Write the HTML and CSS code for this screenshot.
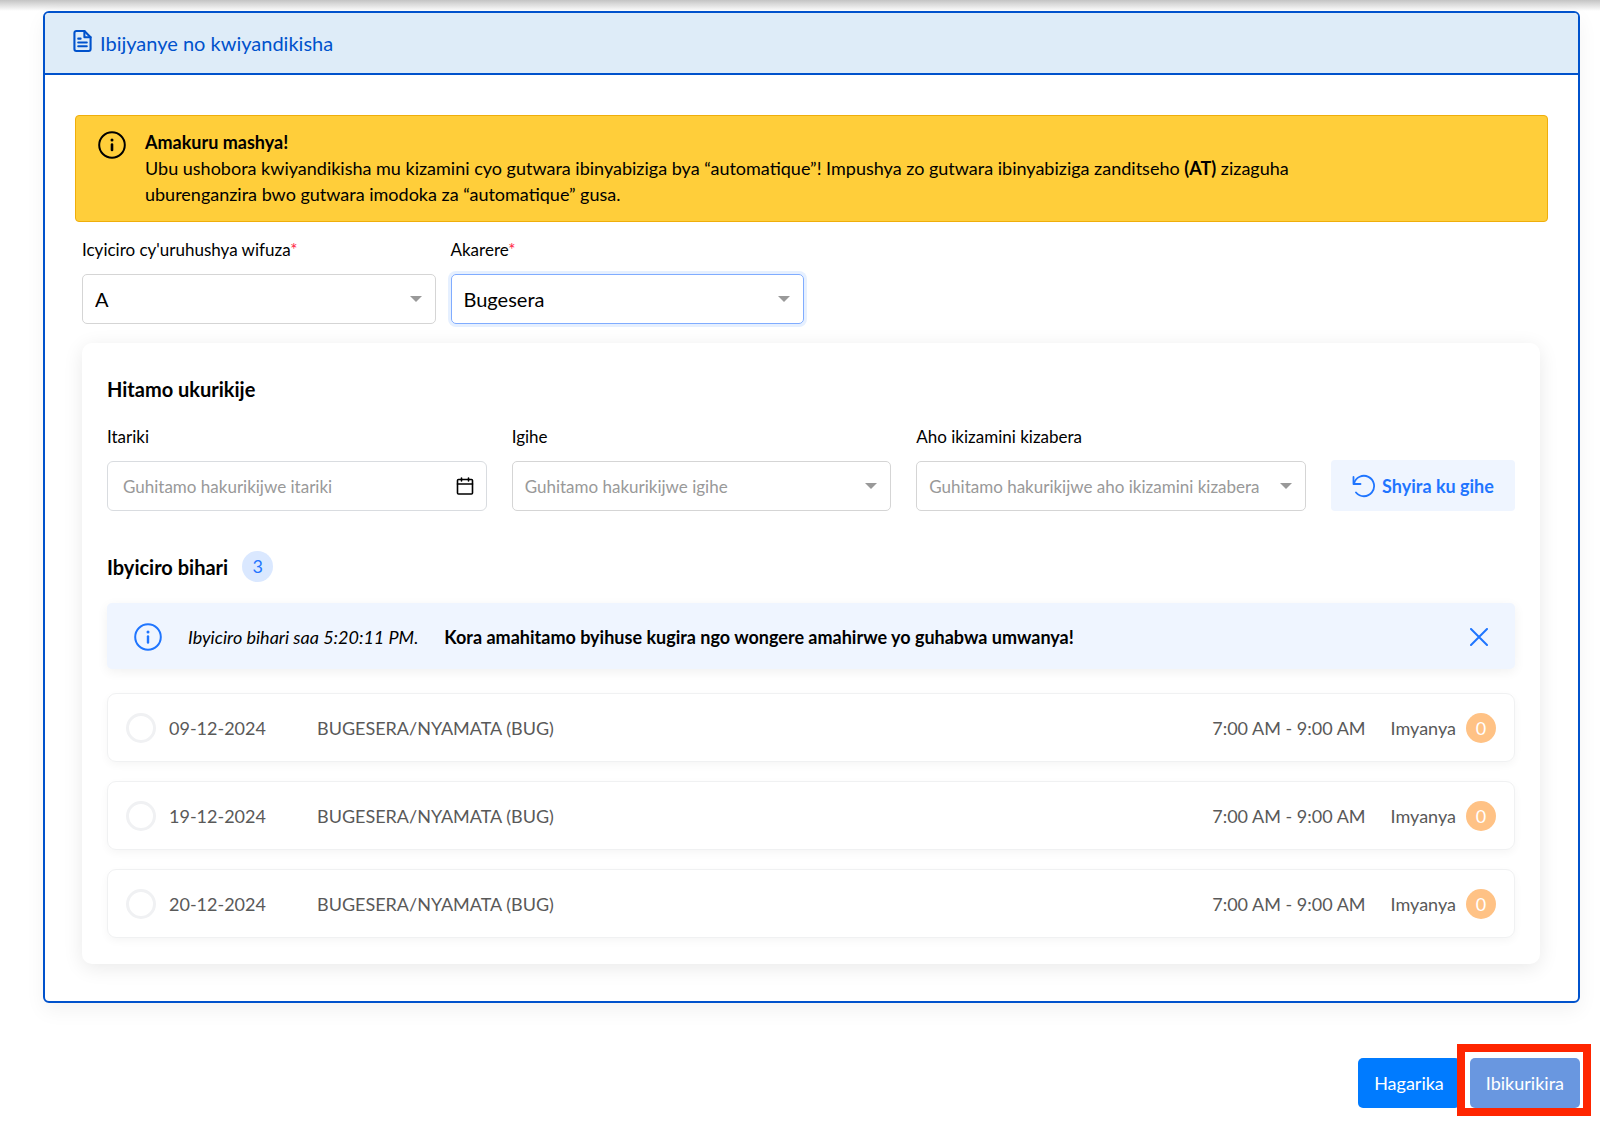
FILE: index.html
```html
<!DOCTYPE html>
<html lang="rw">
<head>
    <meta charset="UTF-8">
    <meta name="viewport" content="width=device-width, initial-scale=1.0">
    <title>Ibijyanye no kwiyandikisha</title>
    <link rel="stylesheet" href="styles.css">
</head>
<body>

<div class="top-shadow"></div>

<form class="page">
    <section class="card">
        <header class="card-header">
            <svg class="icon-file" viewBox="0 0 20 24" fill="none" stroke="currentColor" stroke-width="2.2" stroke-linejoin="round" stroke-linecap="round">
                <path d="M12 1.5H3.5a2 2 0 0 0-2 2v17a2 2 0 0 0 2 2h13a2 2 0 0 0 2-2V8z"/>
                <path d="M12 1.5V8h6.5M5.5 9.5H8M5.5 13.5h9M5.5 17.5h9"/>
            </svg>
            <span>Ibijyanye no kwiyandikisha</span>
        </header>

        <div class="card-body">
            <div class="alert">
                <svg class="icon-info" viewBox="0 0 28 28" fill="none" stroke="currentColor" stroke-width="2" stroke-linecap="round">
                    <circle cx="14" cy="14" r="12.8"/>
                    <path d="M14 13.5v5.5" stroke-width="2.6"/>
                    <circle cx="14" cy="9" r="1.5" fill="currentColor" stroke="none"/>
                </svg>
                <div class="alert-text">
                    <strong>Amakuru mashya!</strong><br>
                    Ubu ushobora kwiyandikisha mu kizamini cyo gutwara ibinyabiziga bya “automatique”! Impushya zo gutwara ibinyabiziga zanditseho <strong>(AT)</strong> zizaguha<br>
                    uburenganzira bwo gutwara imodoka za “automatique” gusa.
                </div>
            </div>

            <div class="choices">
                <div class="field">
                    <label for="category">Icyiciro cy'uruhushya wifuza<span class="required">*</span></label>
                    <div class="select-box">
                        <select id="category">
                            <option>A</option>
                        </select>
                    </div>
                </div>
                <div class="field">
                    <label for="district">Akarere<span class="required">*</span></label>
                    <div class="select-box focused">
                        <select id="district">
                            <option>Bugesera</option>
                        </select>
                    </div>
                </div>
            </div>

            <section class="panel">
                <h2>Hitamo ukurikije</h2>
                <div class="filters">
                    <div class="field">
                        <label for="date">Itariki</label>
                        <div class="date-box">
                            <input type="text" id="date" placeholder="Guhitamo hakurikijwe itariki">
                            <svg class="icon-calendar" viewBox="0 0 18 18" fill="none" stroke="currentColor" stroke-width="1.6" stroke-linejoin="round" stroke-linecap="round">
                                <rect x="1.5" y="2.5" width="15" height="14.5" rx="1"/>
                                <path d="M1.5 7h15M5.5 1v3M12.5 1v3"/>
                            </svg>
                        </div>
                    </div>
                    <div class="field">
                        <label for="time">Igihe</label>
                        <div class="select-box empty">
                            <select id="time">
                                <option>Guhitamo hakurikijwe igihe</option>
                            </select>
                        </div>
                    </div>
                    <div class="field">
                        <label for="place">Aho ikizamini kizabera</label>
                        <div class="select-box empty">
                            <select id="place">
                                <option>Guhitamo hakurikijwe aho ikizamini kizabera</option>
                            </select>
                        </div>
                    </div>
                    <button type="reset" class="btn-reset">
                        <svg class="icon-reset" viewBox="0 0 24 24" fill="none" stroke="currentColor" stroke-width="1.8" stroke-linecap="round" stroke-linejoin="round">
                            <path d="M1.5 3v7h7"/>
                            <path d="M2 9.5A10.2 10.2 0 1 1 4 18.5"/>
                        </svg>
                        Shyira ku gihe
                    </button>
                </div>

                <h2 class="slots-title">Ibyiciro bihari <span class="count">3</span></h2>

                <div class="notice">
                    <svg class="icon-info" viewBox="0 0 28 28" fill="none" stroke="currentColor" stroke-width="2" stroke-linecap="round">
                        <circle cx="14" cy="14" r="12.8"/>
                        <path d="M14 13.5v6" stroke-width="2.4"/>
                        <circle cx="14" cy="9" r="1.5" fill="currentColor" stroke="none"/>
                    </svg>
                    <em>Ibyiciro bihari saa 5:20:11 PM.</em>
                    <strong>Kora amahitamo byihuse kugira ngo wongere amahirwe yo guhabwa umwanya!</strong>
                    <button type="button" class="btn-close" aria-label="Funga">
                        <svg viewBox="0 0 18 18" fill="none" stroke="currentColor" stroke-width="2" stroke-linecap="round">
                            <path d="M1 1l16 16M17 1L1 17"/>
                        </svg>
                    </button>
                </div>

                <div class="slots">
                    <label class="slot">
                        <input type="radio" name="slot" disabled>
                        <span class="slot-date">09-12-2024</span>
                        <span class="slot-place">BUGESERA/NYAMATA (BUG)</span>
                        <span class="slot-time">7:00 AM - 9:00 AM</span>
                        <span class="slot-seats">Imyanya <span class="seats">0</span></span>
                    </label>
                    <label class="slot">
                        <input type="radio" name="slot" disabled>
                        <span class="slot-date">19-12-2024</span>
                        <span class="slot-place">BUGESERA/NYAMATA (BUG)</span>
                        <span class="slot-time">7:00 AM - 9:00 AM</span>
                        <span class="slot-seats">Imyanya <span class="seats">0</span></span>
                    </label>
                    <label class="slot">
                        <input type="radio" name="slot" disabled>
                        <span class="slot-date">20-12-2024</span>
                        <span class="slot-place">BUGESERA/NYAMATA (BUG)</span>
                        <span class="slot-time">7:00 AM - 9:00 AM</span>
                        <span class="slot-seats">Imyanya <span class="seats">0</span></span>
                    </label>
                </div>
            </section>
        </div>
    </section>

    <div class="actions">
        <button type="button" class="btn btn-cancel">Hagarika</button>
        <div class="highlight">
            <button type="submit" class="btn btn-next" disabled>Ibikurikira</button>
        </div>
    </div>
</form>

</body>
</html>
```

FILE: styles.css
```css
* {
    box-sizing: border-box;
}
body {
    font-family: Lato, "Open Sans", sans-serif;
    font-size: 18px;
    line-height: 24px;
    color: #000;
    background-color: #fff;
    margin: 0;
}
input, select, button {
    font-family: inherit;
    font-size: inherit;
}
svg {
    display: block;
    flex-shrink: 0;
}
.top-shadow {
    height: 11px;
    background: linear-gradient(#c4c4c4, #fff);
}
.page {
    padding: 0 20px 14px 43px;
}
.card {
    border: 2px solid #0052cc;
    border-radius: 6px;
    box-shadow: 0 8px 20px rgba(0, 0, 0, 0.05);
}
.card-header {
    display: flex;
    align-items: center;
    gap: 8px;
    height: 62px;
    padding: 0 28px;
    font-size: 20px;
    color: #0052cc;
    background-color: #deecf8;
    border-bottom: 2px solid #0052cc;
    border-radius: 4px 4px 0 0;
}
.icon-file {
    width: 19px;
    height: 24px;
    margin-bottom: 4px;
}
.icon-info {
    width: 28px;
    height: 28px;
}
.card-body {
    padding: 40px 30px 37px;
}
.alert {
    display: flex;
    gap: 19px;
    padding: 13px 22px 14px;
    line-height: 26px;
    background-color: #ffce3a;
    border: 1px solid #efae0c;
    border-radius: 4px;
}
.alert .icon-info {
    margin-top: 2px;
}
.choices {
    display: grid;
    grid-template-columns: repeat(4, 1fr);
    gap: 15px;
    margin: 16px 7px 19px;
}
.field label {
    display: block;
    margin-bottom: 12px;
    font-size: 17px;
}
.required {
    color: #ff1a43;
}
.select-box {
    display: grid;
    align-items: center;
    height: 50px;
    font-size: 20px;
    border: 1px solid #d5d5d5;
    border-radius: 5px;
}
.select-box select {
    grid-area: 1 / 1;
    width: 100%;
    height: 100%;
    padding: 0 30px 0 12px;
    color: inherit;
    background: none;
    border: none;
    outline: none;
    appearance: none;
}
/* drop-down arrow */
.select-box::after {
    content: "";
    grid-area: 1 / 1;
    justify-self: end;
    margin-right: 13px;
    border: 6px solid transparent;
    border-top-color: #999;
    border-bottom: none;
    pointer-events: none;
}
.focused {
    border-color: #80acff;
    box-shadow: 0 0 0 3px #e6f0ff;
}
.empty {
    font-size: 17px;
    color: #999;
}
.panel {
    margin: 0 8px 0 7px;
    padding: 32px 25px 26px;
    border-radius: 10px;
    box-shadow: 0 4px 20px rgba(0, 0, 0, 0.09);
}
h2 {
    margin: 0 0 22px;
    font-size: 20px;
    line-height: 28px;
}
.filters {
    display: grid;
    grid-template-columns: 38fr 38fr 39fr 184px;
    align-items: end;
    gap: 25px;
}
.date-box {
    display: flex;
    align-items: center;
    height: 50px;
    padding: 0 12px 0 15px;
    font-size: 17px;
    border: 1px solid #d9dce0;
    border-radius: 6px;
}
.date-box input {
    flex: 1;
    min-width: 0;
    padding: 0;
    border: none;
    outline: none;
}
.date-box input::placeholder {
    color: #999;
}
.icon-calendar {
    width: 18px;
    height: 18px;
}
.btn-reset {
    display: flex;
    align-items: center;
    justify-content: center;
    gap: 6px;
    height: 51px;
    padding: 0;
    font-weight: bold;
    color: #1f75ff;
    background-color: #eff5ff;
    border: none;
    border-radius: 4px;
    cursor: pointer;
}
.icon-reset {
    width: 24px;
    height: 24px;
}
.slots-title {
    display: flex;
    align-items: center;
    gap: 14px;
    margin: 40px 0 21px;
}
.count {
    width: 31px;
    height: 31px;
    font-size: 18px;
    font-weight: normal;
    line-height: 31px;
    text-align: center;
    color: #1f75ff;
    background-color: #dae8ff;
    border-radius: 50%;
}
.notice {
    display: flex;
    align-items: center;
    gap: 26px;
    height: 66px;
    padding: 2px 27px 0;
    background-color: #eff5ff;
    border-radius: 5px;
    box-shadow: 0 3px 12px rgba(0, 0, 0, 0.06);
}
.notice .icon-info,
.btn-close {
    color: #1f75ff;
}
.btn-close {
    margin-left: auto;
    padding: 0;
    background: none;
    border: none;
    cursor: pointer;
}
.btn-close svg {
    width: 18px;
    height: 18px;
}
.slots {
    display: grid;
    gap: 19px;
    margin-top: 24px;
}
.slot {
    display: flex;
    align-items: center;
    height: 69px;
    padding: 0 18px;
    color: #595959;
    border: 1px solid #f0f1f2;
    border-radius: 9px;
    box-shadow: 0 3px 8px rgba(0, 0, 0, 0.04);
}
.slot input {
    width: 30px;
    height: 30px;
    margin: 0 13px 0 0;
    border: 3px solid #f0f1f3;
    border-radius: 50%;
    appearance: none;
}
.slot-date {
    width: 148px;
}
.slot-place {
    flex: 1;
}
.slot-seats {
    display: flex;
    align-items: center;
    gap: 10px;
    margin-left: 25px;
}
.seats {
    width: 30px;
    height: 30px;
    line-height: 30px;
    text-align: center;
    color: #fff;
    background-color: #ffc285;
    border-radius: 50%;
}
.actions {
    display: flex;
    justify-content: flex-end;
    gap: 10px;
    margin-top: 55px;
}
.btn {
    height: 50px;
    padding: 0 16px;
    color: #fff;
    border: none;
    border-radius: 5px;
}
.btn-cancel {
    background-color: #007bff;
    cursor: pointer;
}
.btn-next {
    background-color: #6997e0;
}
.highlight {
    position: relative;
}
/* red frame around the next button */
.highlight::after {
    content: "";
    position: absolute;
    inset: -14px -11px -8px -13px;
    border: 8px solid #ff2600;
    pointer-events: none;
}
```
